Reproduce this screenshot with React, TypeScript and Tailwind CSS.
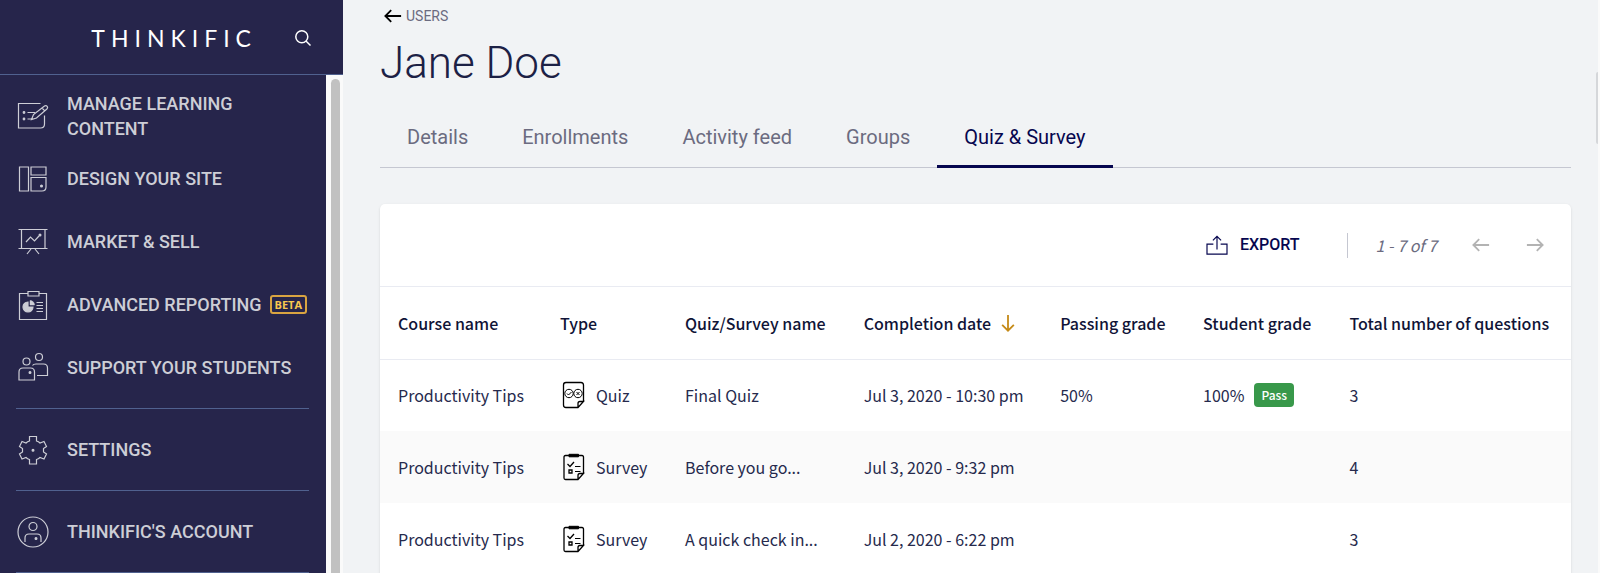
import React, { useState } from 'react'

const TABS = ['Details', 'Enrollments', 'Activity feed', 'Groups', 'Quiz & Survey'] as const
type Tab = (typeof TABS)[number]

interface Result {
  course: string
  type: 'Quiz' | 'Survey'
  name: string
  date: string
  passing?: string
  grade?: string
  questions: number
}

const RESULTS: Result[] = [
  {
    course: 'Productivity Tips',
    type: 'Quiz',
    name: 'Final Quiz',
    date: 'Jul 3, 2020 - 10:30 pm',
    passing: '50%',
    grade: '100%',
    questions: 3,
  },
  { course: 'Productivity Tips', type: 'Survey', name: 'Before you go...', date: 'Jul 3, 2020 - 9:32 pm', questions: 4 },
  { course: 'Productivity Tips', type: 'Survey', name: 'A quick check in...', date: 'Jul 2, 2020 - 6:22 pm', questions: 3 },
]

const NavIcon: React.FC<{ children: React.ReactNode }> = ({ children }) => (
  <svg viewBox="0 0 32 32" className="size-8" fill="none" stroke="currentColor" strokeWidth="1.2" aria-hidden="true">
    {children}
  </svg>
)

const ContentIcon = () => (
  <NavIcon>
    <path d="M23.500 3.500H1.500v24.500h22q4 0 4-4v-8.500" />
    <path d="M14.500 19.500l2-5L27.500 6q1.500-1 2.700.3 1 1.500-.3 2.700L19.500 18zM25 8l3 3.200" />
    <path d="M10.500 12.500h7.500M10.500 19h4.500" />
    <circle cx="7" cy="12.500" r=".8" fill="currentColor" />
    <circle cx="7" cy="19" r=".8" fill="currentColor" />
  </NavIcon>
)

const DesignIcon = () => (
  <NavIcon>
    <path d="M2.500 4h9v24h-9zM14 4h15v8H14zM14 14.500h15V24q0 4-4 4H14z" />
    <circle cx="24.500" cy="23" r=".9" fill="currentColor" />
  </NavIcon>
)

const MarketIcon = () => (
  <NavIcon>
    <path d="M1.500 3.500h29M1.500 22.500h29M4.500 3.500v19M28 3.500v19M14 23l-4 5M18 23l4 5" />
    <path d="M9 16l4.500-5 4 4 4.500-5" />
    <circle cx="23" cy="9" r=".9" fill="currentColor" />
  </NavIcon>
)

const ReportIcon = () => (
  <NavIcon>
    <path d="M11 4.500H2.500v26h27v-26H22M11 2.500h11v4.500H11z" />
    <path d="M11 13a5 5 0 1 0 5 5h-5z" fill="currentColor" />
    <path d="M13 11.500a4.500 4.500 0 0 1 4.500 4.500H13z" fill="currentColor" strokeWidth=".5" />
    <path d="M19.500 13.500H26M19.500 16.500H26M19.500 19.500H26M19.500 22.500H26" />
  </NavIcon>
)

const StudentsIcon = () => (
  <NavIcon>
    <circle cx="9.500" cy="9.500" r="3.500" />
    <circle cx="22" cy="5" r="3.500" />
    <path d="M2 28V20q0-4 4-4h7.500q4 0 4 4v8z" />
    <path d="M15.500 13.500q1-1.500 3.500-1.500h7.500q4 0 4 4v7.500H20" />
    <circle cx="13" cy="20.500" r=".9" fill="currentColor" />
  </NavIcon>
)

const SettingsIcon = () => (
  <NavIcon>
    <path d="M12.500 2.500h7V7q2 .5 3.500 2l4-1.500 2.500 5-3 2v3.500l3 2-2.500 5-4-1.500q-1.500 1.500-3.500 2v4.500h-7v-4.500q-2-.5-3.500-2L5 25l-2.500-5 3-2v-3.500l-3-2L5 7.500 9 9q1.500-1.500 3.500-2z" />
    <circle cx="16" cy="16.200" r=".9" fill="currentColor" />
  </NavIcon>
)

const AccountIcon = () => (
  <NavIcon>
    <circle cx="16" cy="16" r="15" />
    <circle cx="16" cy="10.500" r="4" />
    <path d="M8 26v-4q0-4 4-4h8q4 0 4 4v4" />
    <circle cx="19" cy="22.500" r=".9" fill="currentColor" />
  </NavIcon>
)

const ArrowIcon: React.FC<{ className: string }> = ({ className }) => (
  <svg viewBox="0 0 20 20" className={className} fill="none" stroke="currentColor" strokeWidth="2" aria-hidden="true">
    <path d="M19 10H2M8 3.500L1.500 10 8 16.500" />
  </svg>
)

const QuizIcon = () => (
  <svg viewBox="0 0 28 28" className="size-7" fill="none" stroke="#000" strokeWidth="1.300" aria-hidden="true">
    <path d="M23.500 20.500V4q0-2.500-2.500-2.500H6Q3.500 1.500 3.500 4v20q0 2.500 2.500 2.500h12l5.500-6H20q-2 0-2 2v4" />
    <g strokeWidth="1">
      <circle cx="9" cy="12.500" r="4.200" />
      <circle cx="18" cy="12.500" r="4.200" />
      <path d="M7 12.500l1.500 1.500 3-3M16.500 11l3 3M19.500 11l-3 3" />
    </g>
  </svg>
)

const SurveyIcon = () => (
  <svg viewBox="0 0 28 28" className="size-7" fill="none" stroke="#000" strokeWidth="1.300" aria-hidden="true">
    <path d="M23.500 20.500V4q0-1.500-1.500-1.500H5.500Q4 2.500 4 4v21q0 1.500 1.500 1.500H18l5.500-6H20q-2 0-2 2v4" />
    <path d="M9 1.300h9.500v2.500H9z" fill="#000" strokeWidth="1" />
    <path d="M7.500 11l2.500 2.500 4-4.500" />
    <path d="M9 17h3v3H9z" />
    <path d="M15 13.500h5.500M15 18.500h5.500" strokeWidth="1" />
  </svg>
)

const NavItem: React.FC<{ icon: React.ReactNode; label: string; beta?: boolean }> = ({ icon, label, beta }) => (
  <a href="#" className="flex min-h-[63px] items-center gap-[17px]">
    <span className="flex w-[34px] shrink-0 justify-center">{icon}</span>
    {beta ? (
      <span className="flex items-center gap-2 whitespace-nowrap">
        {label}
        <span className="rounded-[3px] border-2 border-[#d9a441] px-[3px] font-['Open_Sans',sans-serif] text-[11px] leading-[15px] font-bold text-[#f9c74f]">
          BETA
        </span>
      </span>
    ) : (
      <span>{label}</span>
    )}
  </a>
)

const Sidebar = () => (
  <aside className="flex w-[343px] shrink-0 flex-col bg-[#26254b] text-[#cdced6]">
    <header className="flex h-[75px] shrink-0 items-center justify-end gap-[38px] border-b border-[#50618f] pt-px pr-8 text-white">
      <a href="#" className="font-['Lato',sans-serif] text-[23px] leading-7 tracking-[6px]">
        THINKIFIC
      </a>
      <button type="button" aria-label="Search">
        <svg viewBox="0 0 16 16" className="size-4" fill="none" stroke="currentColor" strokeWidth="1.500">
          <circle cx="6.800" cy="6.800" r="6" />
          <path d="M11 11l4.500 4.500" />
        </svg>
      </button>
    </header>
    <div className="flex min-h-0 grow">
      <nav className="grow overflow-hidden pt-[9px] pr-[17px] pl-4 text-[18px] leading-[25px] font-medium">
        <div className="pb-[9px]">
          <NavItem icon={<ContentIcon />} label="MANAGE LEARNING CONTENT" />
          <NavItem icon={<DesignIcon />} label="DESIGN YOUR SITE" />
          <NavItem icon={<MarketIcon />} label="MARKET & SELL" />
          <NavItem icon={<ReportIcon />} label="ADVANCED REPORTING" beta />
          <NavItem icon={<StudentsIcon />} label="SUPPORT YOUR STUDENTS" />
        </div>
        <div className="border-t border-[#50618f] py-[9px]">
          <NavItem icon={<SettingsIcon />} label="SETTINGS" />
        </div>
        <div className="border-y border-[#50618f] py-[9px]">
          <NavItem icon={<AccountIcon />} label="THINKIFIC'S ACCOUNT" />
        </div>
      </nav>
      <div className="flex w-[17px] shrink-0 justify-end bg-[#fafafa] pt-1 pr-[3px]">
        <div className="w-[9px] rounded-t-full bg-[#c1c1c1]" />
      </div>
    </div>
  </aside>
)

export default function App() {
  const [tab, setTab] = useState<Tab>('Quiz & Survey')

  return (
    <div className="relative flex h-screen overflow-hidden bg-[#f1f3f5] font-['Roboto',sans-serif]">
      <Sidebar />

      <main className="min-w-0 grow border-r-2 border-[#fafafa] pr-[27px] pl-[37px]">
        <a href="#" className="flex items-center gap-1 pt-1 pl-1 text-[14px] leading-6 text-[#6b6b80]">
          <ArrowIcon className="size-[18px] text-black" />
          USERS
        </a>
        <h1 className="pt-2 text-[44px] leading-[54px] font-light text-[#1c2145]">Jane Doe</h1>

        {/* Tabs */}
        <div role="tablist" className="mt-[13px] flex border-b border-[#c5c7d1]">
          {TABS.map((name) => (
            <button
              key={name}
              type="button"
              role="tab"
              aria-selected={name === tab}
              onClick={() => setTab(name)}
              className={`-mb-px border-b-[3px] px-[27px] pt-5 pb-[14px] text-[20px] leading-[28px] ${
                name === tab ? 'border-[#06064f] text-[#06064f]' : 'border-transparent text-[#6b6b80]'
              }`}
            >
              {name}
            </button>
          ))}
        </div>

        {/* Results */}
        <section className="mt-9 rounded-t-[5px] bg-white font-['Noto_Sans_CJK_SC',sans-serif] text-[#262a4d] shadow-sm">
          <div className="flex h-[83px] items-center justify-end border-b border-[#e9ebf2] pr-[27px]">
            <button
              type="button"
              className="flex items-center gap-3 font-['Roboto',sans-serif] text-[16px] leading-6 font-medium text-[#06064f]"
            >
              <svg viewBox="0 0 24 22" className="h-[20px] w-[22px]" fill="none" stroke="currentColor" strokeWidth="1.300">
                <path d="M8 10H1v11h22V10h-7M12 16V2M7.500 6L12 1.500 16.500 6" />
              </svg>
              EXPORT
            </button>
            <span className="mr-7 ml-[47px] h-[25px] w-px bg-[#c5c7d1]" />
            <span className="text-[16px] leading-6 text-[#6b6b80] italic">1 - 7 of 7</span>
            <button type="button" aria-label="Previous page" className="ml-[35px] text-[#b3b3b3]">
              <ArrowIcon className="size-[18px]" />
            </button>
            <button type="button" aria-label="Next page" className="ml-9 text-[#b3b3b3]">
              <ArrowIcon className="size-[18px] rotate-180" />
            </button>
          </div>

          <table className="w-full table-fixed text-left text-[16px] leading-6 whitespace-nowrap">
            <colgroup>
              <col className="w-[13.6%]" />
              <col className="w-[10.5%]" />
              <col className="w-[15%]" />
              <col className="w-[16.5%]" />
              <col className="w-[12%]" />
              <col className="w-[12.3%]" />
              <col />
            </colgroup>
            <thead>
              <tr className="h-[72px] border-b border-[#e9ebf2] text-[#101437] *:pl-[18px] *:font-medium">
                <th scope="col">Course name</th>
                <th scope="col">Type</th>
                <th scope="col">Quiz/Survey name</th>
                <th scope="col" aria-sort="descending">
                  <span className="flex items-center gap-2">
                    Completion date
                    <ArrowIcon className="size-[18px] -rotate-90 text-[#c58a17]" />
                  </span>
                </th>
                <th scope="col">Passing grade</th>
                <th scope="col">Student grade</th>
                <th scope="col">Total number of questions</th>
              </tr>
            </thead>
            <tbody>
              {RESULTS.map((row) => (
                <tr key={row.date} className="h-[72px] *:pl-[18px] even:bg-[#fafafa]">
                  <td>{row.course}</td>
                  <td>
                    <span className="flex items-center gap-2">
                      {row.type === 'Quiz' ? <QuizIcon /> : <SurveyIcon />}
                      {row.type}
                    </span>
                  </td>
                  <td>{row.name}</td>
                  <td>{row.date}</td>
                  <td>{row.passing}</td>
                  <td>
                    {row.grade && (
                      <span className="flex items-center gap-[10px]">
                        {row.grade}
                        <span className="rounded-[4px] bg-[#38984a] px-[7px] text-[12px] leading-6 font-medium text-white">
                          Pass
                        </span>
                      </span>
                    )}
                  </td>
                  <td>{row.questions}</td>
                </tr>
              ))}
            </tbody>
          </table>
        </section>
      </main>

      {/* Edge of the collapsed help drawer */}
      <div className="absolute top-[72px] right-0.5 h-[72px] w-0.5 rounded-l bg-[#d5d7da]" />
    </div>
  )
}
